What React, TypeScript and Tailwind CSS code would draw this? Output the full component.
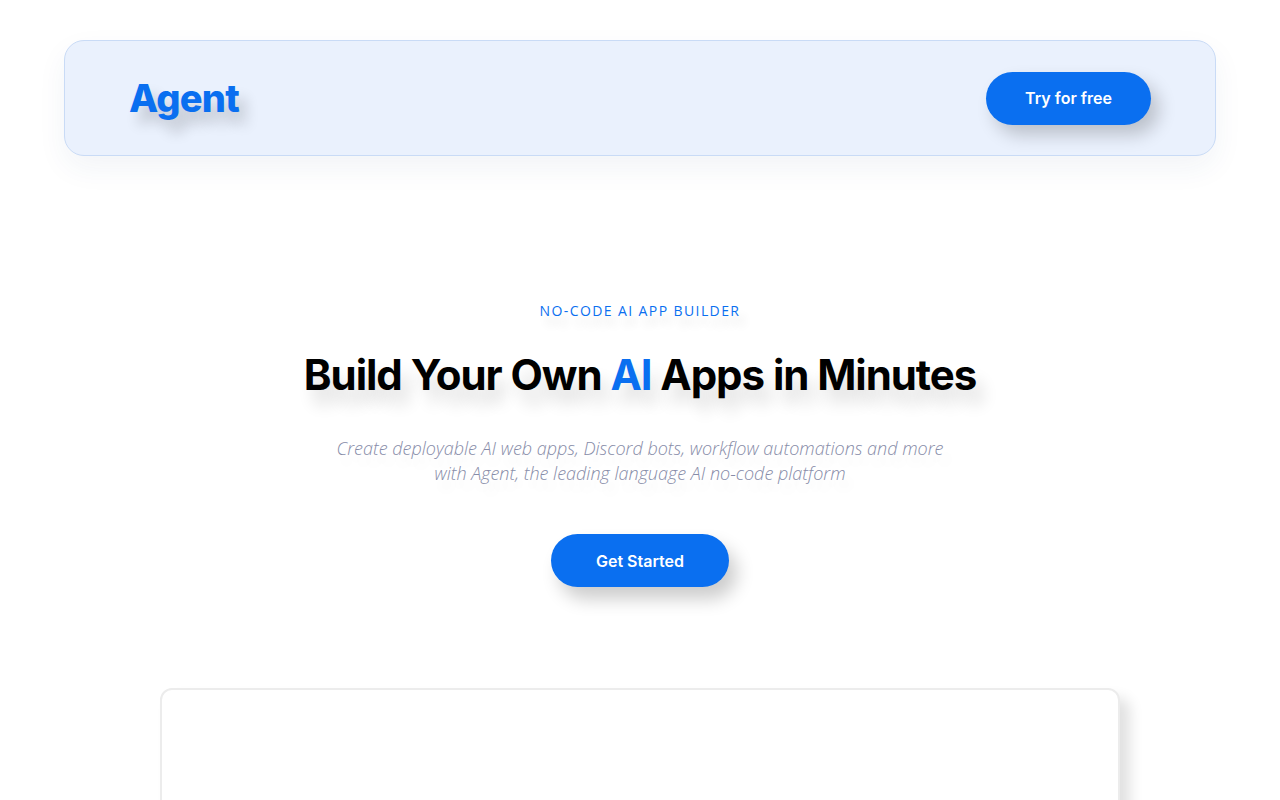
export default function App() {
  return (
    <div className="min-h-screen bg-white font-['Inter','Liberation_Sans',sans-serif]">
      {/* Top bar */}
      <div className="px-16 pt-10">
        <header className="flex h-[116px] items-center justify-between rounded-[20px] border border-[#c9dbf6] bg-[#eaf1fd] px-16 shadow-[0_12px_30px_rgba(30,60,120,0.06)]">
          <span className="text-[38px] font-extrabold tracking-[-0.02em] text-[#0a6ff0] [text-shadow:8px_12px_14px_rgba(0,0,0,0.2)]">
            Agent
          </span>
          <button className="h-[53px] w-[165px] rounded-full bg-[#0a6ff0] text-[16px] font-semibold text-white shadow-[8px_10px_18px_rgba(0,0,0,0.2)]">
            Try for free
          </button>
        </header>
      </div>

      {/* Hero */}
      <section className="flex flex-col items-center pt-[144px] text-center">
        <p className="font-['Open_Sans',sans-serif] text-[14px] tracking-[0.1em] text-[#0a6ff0] [text-shadow:6px_10px_10px_rgba(0,0,0,0.12)]">
          NO-CODE AI APP BUILDER
        </p>
        <h1 className="mt-[26px] text-[42px] font-bold leading-[56px] tracking-[-0.025em] text-black [text-shadow:8px_14px_16px_rgba(0,0,0,0.14)]">
          Build Your Own <span className="text-[#0a6ff0]">AI</span> Apps in Minutes
        </h1>
        <p className="mt-[33px] w-[640px] font-['Open_Sans',sans-serif] text-[18px] font-light italic leading-[25px] text-[#878ca8] [text-shadow:6px_10px_12px_rgba(0,0,0,0.08)]">
          Create deployable AI web apps, Discord bots, workflow automations and more with Agent, the leading language AI no-code platform
        </p>
        <button className="mt-[48px] h-[53px] w-[178px] rounded-full bg-[#0a6ff0] text-[16px] font-semibold text-white shadow-[8px_12px_18px_rgba(0,0,0,0.2)]">
          Get Started
        </button>
      </section>

      {/* Preview card */}
      <div className="flex justify-center pt-[101px]">
        <div className="h-[300px] w-[960px] rounded-[12px] border-2 border-[#ececec] bg-white shadow-[10px_10px_14px_rgba(0,0,0,0.12)]" />
      </div>
    </div>
  );
}
